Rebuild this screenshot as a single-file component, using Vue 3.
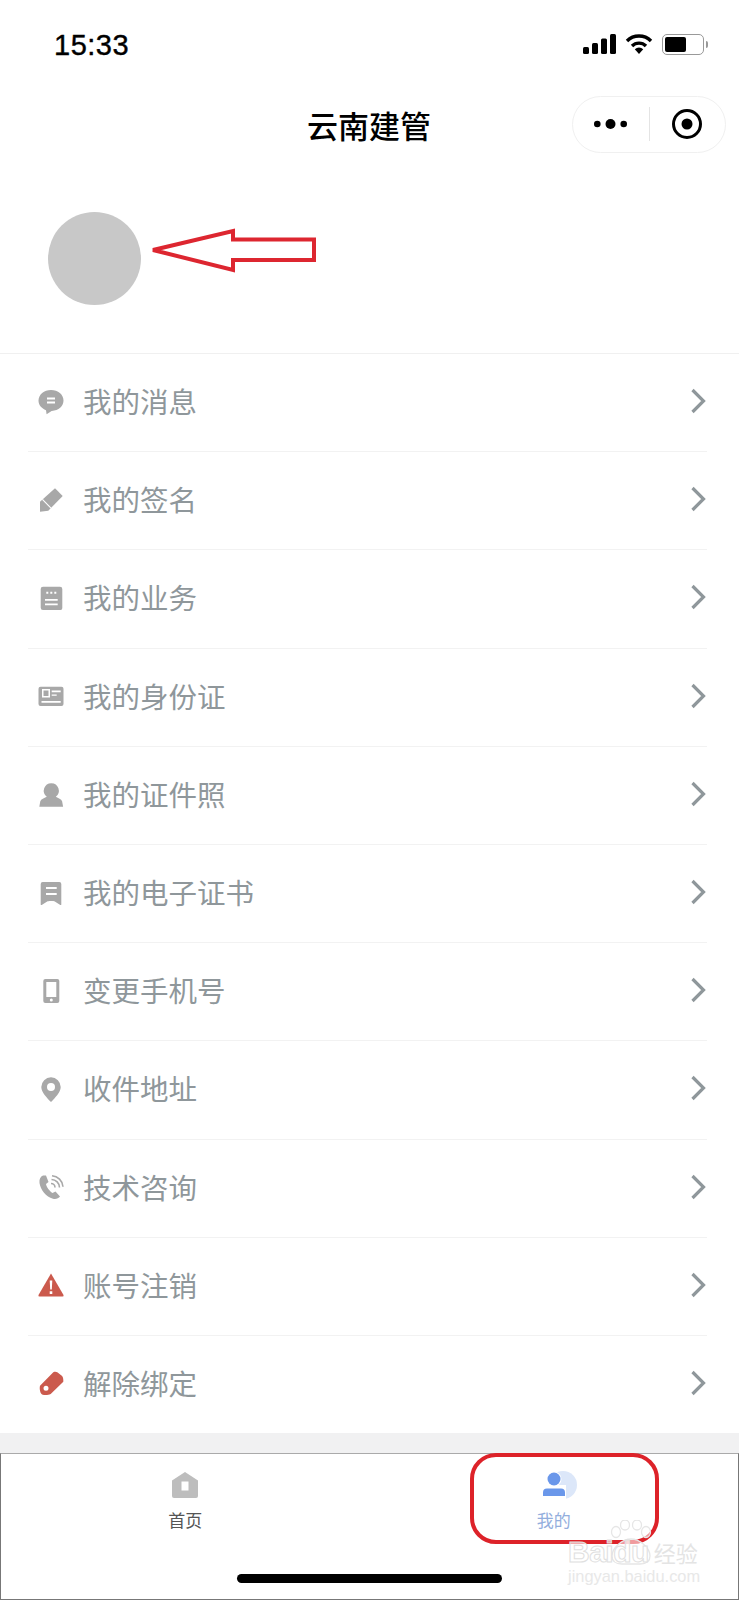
<script setup>
// menu rows: main = filled shape, cut = white detail, line = stroked detail
const gray = '#a8a8a8';
const red = '#cb5a4d';

const menus = [
  {
    label: '我的消息', color: gray,
    main: 'M13 1C6 1 .5 5.6 .5 11.6c0 4.6 3.2 8 7.5 9.6l.6 4 5-3.3C20.5 22 25.5 17.5 25.5 11.6 25.5 5.6 20 1 13 1z',
    cut: 'M9 8.500h8v2H9zM9 12.500h8v2H9z'
  },
  {
    label: '我的签名', color: gray,
    main: 'M2 24.700V14.700L17 1.300 24.700 9 10.300 23.700z',
    cut: 'M4 12.800l.8-.8 8.600 8.800-.8.800z'
  },
  {
    label: '我的业务', color: gray,
    main: 'M5 1.700h17a2.300 2.300 0 0 1 2.300 2.300v19a2 2 0 0 1-2.300 2H5a2.300 2.300 0 0 1-2.300-2.300V4A2.300 2.300 0 0 1 5 1.700z',
    cut: 'M7 14h12.700v1.800H7zM7 18.400h12.700v1.800H7zM8.300 6.800h2v2h-2zM12.300 6.800h2v2h-2zM16.300 6.800h2v2h-2z'
  },
  {
    label: '我的身份证', color: gray,
    main: 'M2.500 3.700h21a2 2 0 0 1 2 2v15.300a2 2 0 0 1-2 2h-21a2 2 0 0 1-2-2V5.700a2 2 0 0 1 2-2z',
    cut: 'M4 6h8v8.500H4zM13.700 7.500h9v1.800h-9zM13.700 11.500h5v1.300h-5zM3.500 18h19.200v1.800H3.500z',
    inner: 'M5.500 7.500h5v5.500h-5z'
  },
  {
    label: '我的证件照', color: gray,
    main: 'M13.300 2.200a7.500 7.500 0 0 1 4.500 13.500c2.500 1.200 5.500 2.500 6.300 4.500l1 5.500H1.300l1-5.500c.8-2 3.800-3.300 6.500-4.500a7.500 7.500 0 0 1 4.500-13.500z'
  },
  {
    label: '我的电子证书', color: gray,
    main: 'M5.700 2h15.600a2 2 0 0 1 2 2v20.500c0 .6-.6.8-1 .4l-5.500-3.400c-.7-.4-1.500-.6-3.800-.6s-3.100.2-3.800.6l-5.500 3.400c-.4.4-1 .2-1-.4V4a2 2 0 0 1 2-2z',
    cut: 'M8 7h10.700v2H8zM8 13h10.700v2H8z'
  },
  {
    label: '变更手机号', color: gray,
    main: 'M7.300 1h12a2 2 0 0 1 2 2v20a2 2 0 0 1-2 2h-12a2 2 0 0 1-2-2V3a2 2 0 0 1 2-2z',
    cut: 'M8.300 4h10v15h-10zM11.800 22a1.500 1.500 0 1 0 3 0 1.500 1.500 0 1 0-3 0z'
  },
  {
    label: '收件地址', color: gray,
    main: 'M13 1.300a9.700 9.700 0 0 1 9.700 9.700c0 5-5.700 11-9.700 15-4-4-9.700-10-9.700-15A9.700 9.700 0 0 1 13 1.300z',
    cut: 'M9 11a4 4 0 1 0 8 0 4 4 0 1 0-8 0z'
  },
  {
    label: '技术咨询', color: gray,
    main: 'M5 1.500C2.500 2.500 1 5 1.500 9c1 6.500 6.500 14 13.500 15.800 3 .7 5.500-.3 7-2.300l-4.500-5-3 1.500c-3-2-6-6-6.500-9l2.500-2L8 1.500z',
    line: 'M13 9.500a4 4 0 0 1 4 4M13.500 5.500a8 8 0 0 1 8 8M14 1.700a12 12 0 0 1 11 11'
  },
  {
    label: '账号注销', color: red,
    main: 'M13 1.500L25.500 23q.5 1.500-1 1.500H1.500q-1.500 0-1-1.500z',
    cut: 'M11.700 8.500h2.600l-.5 9h-1.600zM11.700 19.300h2.600v2.600h-2.600z'
  },
  {
    label: '解除绑定', color: red,
    main: 'M2 15.700L15.300 2.300c1.500-.8 3-.5 4 0l4.500 3.500c1.300 1 1.700 4 1.500 5.900L12.700 24c-2.500 1.200-6 1-8 .7-2.500-.7-3.500-6-2.700-9z',
    cut: 'M5.500 18.300a2.500 2.500 0 1 0 5 0 2.500 2.500 0 1 0-5 0z'
  }
];
</script>

<template>
  <div class="page">
    <!-- status bar -->
    <div class="status-bar">
      <span class="time">15:33</span>
      <div class="status-icons">
        <svg width="33" height="20" viewBox="0 0 33 20">
          <rect x="0" y="13" width="6" height="7" rx="1.500" />
          <rect x="9" y="9" width="6" height="11" rx="1.500" />
          <rect x="18" y="4.500" width="6" height="15.500" rx="1.500" />
          <rect x="27" y="0" width="6" height="20" rx="1.500" />
        </svg>
        <svg width="28" height="20" viewBox="0 0 28 20">
          <path d="M2 7a17 17 0 0 1 24 0" fill="none" stroke="#000" stroke-width="3.400" />
          <path d="M7 12a10 10 0 0 1 14 0" fill="none" stroke="#000" stroke-width="3.400" />
          <path d="M9.800 15.200a6 6 0 0 1 8.400 0L14 20z" />
        </svg>
        <div class="battery">
          <div class="battery-level"></div>
        </div>
        <div class="battery-nub"></div>
      </div>
    </div>

    <!-- nav bar -->
    <div class="nav-bar">
      <span class="nav-title">云南建管</span>
      <div class="capsule">
        <div class="capsule-part">
          <svg width="33" height="12" viewBox="0 0 33 12">
            <circle cx="3.300" cy="6" r="3.300" />
            <circle cx="16.500" cy="6" r="5" />
            <circle cx="29.700" cy="6" r="3.300" />
          </svg>
        </div>
        <div class="capsule-line"></div>
        <div class="capsule-part">
          <svg width="32" height="32" viewBox="0 0 32 32">
            <circle cx="16" cy="16" r="13.500" fill="none" stroke="#000" stroke-width="3" />
            <circle cx="16" cy="16" r="5.500" />
          </svg>
        </div>
      </div>
    </div>

    <!-- profile -->
    <div class="profile">
      <div class="avatar"></div>
    </div>

    <!-- menu -->
    <div class="menu">
      <div v-for="item in menus" :key="item.label" class="menu-row">
        <svg class="menu-icon" width="26" height="26" viewBox="0 0 26 26">
          <path :d="item.main" :fill="item.color" />
          <path v-if="item.cut" :d="item.cut" fill="#fff" />
          <path v-if="item.inner" :d="item.inner" :fill="item.color" />
          <path v-if="item.line" :d="item.line" fill="none" :stroke="item.color" stroke-width="1.600" />
        </svg>
        <span class="menu-label">{{ item.label }}</span>
        <svg class="chevron" width="16" height="26" viewBox="0 0 16 26">
          <path d="M2.500 2l11 11-11 11" fill="none" stroke="#8f979b" stroke-width="3.200" />
        </svg>
      </div>
    </div>

    <div class="band"></div>

    <!-- tab bar -->
    <div class="tab-bar">
      <div class="tabs">
        <div class="tab">
          <svg width="28" height="28" viewBox="0 0 28 28">
            <path d="M14 1L27 9.500V25a2 2 0 0 1-2 2H3a2 2 0 0 1-2-2V9.500z" fill="#bdbdbd" />
            <rect x="10.500" y="10.500" width="7" height="9" fill="#fff" />
          </svg>
          <span class="tab-label">首页</span>
        </div>
        <div class="tab active">
          <svg width="36" height="28" viewBox="0 0 36 28">
            <circle cx="21" cy="14" r="14" fill="#dce7f9" />
            <circle cx="12" cy="8" r="7.500" fill="#fff" />
            <rect x="0" y="14" width="24" height="14" fill="#fff" />
            <circle cx="12" cy="8" r="6.500" fill="#6a97ea" />
            <path d="M5 17.500h14a4 4 0 0 1 4 4V25H1v-3.500a4 4 0 0 1 4-4z" fill="#6a97ea" />
          </svg>
          <span class="tab-label">我的</span>
        </div>
      </div>
      <div class="home-bar"></div>
    </div>

    <!-- annotations on top of the screenshot -->
    <svg class="arrow" width="170" height="46" viewBox="0 0 170 46">
      <path d="M3 22L83 3V11.500H164V32H83V42z" fill="#fff" stroke="#dd2630" stroke-width="4" />
    </svg>
    <div class="tab-mark"></div>

    <div class="watermark">
      <svg class="paw" width="42" height="46" viewBox="0 0 42 46">
        <g fill="rgba(255,255,255,.55)" stroke="#e6e6e6" stroke-width="1.300">
          <ellipse cx="6" cy="12" rx="4.500" ry="5.500" />
          <ellipse cx="15" cy="5" rx="4.500" ry="5" />
          <ellipse cx="27" cy="5" rx="4.500" ry="5" />
          <ellipse cx="36" cy="12" rx="4.500" ry="5.500" />
          <path d="M21 19c-9 0-19 9-19 17 0 7 5 8 10 8h18c5 0 10-1 10-8 0-8-10-17-19-17z" />
        </g>
      </svg>
      <div class="wm-top"><span class="wm-brand">Baidu</span><span class="wm-cn">经验</span></div>
      <div class="wm-url">jingyan.baidu.com</div>
    </div>
  </div>
</template>

<style scoped>
.page {
  position: relative;
  width: 739px;
  height: 1600px;
  overflow: hidden;
  background: #fff;
  font-family: "Noto Sans CJK SC", "Liberation Sans", sans-serif;
}

.status-bar {
  height: 88px;
  box-sizing: border-box;
  padding: 0 31px 0 54px;
  display: flex;
  align-items: center;
  justify-content: space-between;
}
.time {
  margin-top: 2px;
  font-family: "Liberation Sans", sans-serif;
  font-size: 29px;
  letter-spacing: .5px;
  color: #000;
  -webkit-text-stroke: .4px #000;
}
.status-icons {
  display: flex;
  align-items: center;
  gap: 9px;
}
.battery {
  width: 42px;
  height: 21px;
  box-sizing: border-box;
  margin-right: -7px;
  padding: 2px;
  border: 1.500px solid #999;
  border-radius: 5px;
}
.battery-level {
  width: 21px;
  height: 100%;
  background: #000;
  border-radius: 2px;
}
.battery-nub {
  width: 2px;
  height: 7px;
  background: #999;
  border-radius: 0 2px 2px 0;
}

.nav-bar {
  height: 72px;
  box-sizing: border-box;
  padding-right: 13px;
  display: grid;
  grid-template-columns: 1fr auto 1fr;
  align-items: center;
}
.nav-title {
  grid-column: 2;
  margin-left: 12px;
  font-size: 31px;
  font-weight: 500;
  color: #000;
}
.capsule {
  grid-column: 3;
  justify-self: end;
  width: 154px;
  height: 57px;
  box-sizing: border-box;
  display: flex;
  align-items: center;
  border: 1px solid #f0f0f0;
  border-radius: 29px;
}
.capsule-part {
  flex: 1;
  display: flex;
  justify-content: center;
  align-items: center;
}
.capsule-line {
  width: 1px;
  height: 34px;
  background: #e4e4e4;
}

.profile {
  height: 193px;
  box-sizing: border-box;
  padding: 52px 0 0 48px;
}
.avatar {
  width: 93px;
  height: 93px;
  border-radius: 50%;
  background: #c8c8c8;
}

.menu {
  height: 1080px;
  box-sizing: border-box;
  border-top: 1px solid #f0f0f0;
  padding: 0 32px 0 28px;
  display: flex;
  flex-direction: column;
}
.menu-row {
  flex: 1;
  display: flex;
  align-items: center;
  padding: 0 1px 0 10px;
  border-bottom: 1px solid #f2f2f2;
}
.menu-row:last-child {
  border-bottom: 0;
}
.menu-icon {
  flex: none;
  margin-bottom: 2px;
}
.menu-label {
  flex: 1;
  margin: 0 0 4px 19px;
  font-size: 28.500px;
  color: #8f979b;
}
.chevron {
  flex: none;
  margin-bottom: 3px;
}

.band {
  height: 20px;
  background: #f1f1f2;
}

.tab-bar {
  height: 147px;
  box-sizing: border-box;
  border-top: 1.500px solid #aaa;
  border-left: 1px solid #777;
  border-right: 1px solid #777;
  border-bottom: 1px solid #777;
  display: flex;
  flex-direction: column;
  align-items: center;
}
.tabs {
  width: 100%;
  display: flex;
  padding-top: 17px;
}
.tab {
  flex: 1;
  display: flex;
  flex-direction: column;
  align-items: center;
}
.tab-label {
  margin-top: 9px;
  font-size: 17px;
  line-height: 24px;
  color: #555;
}
.active .tab-label {
  color: #93aedd;
}
.active svg {
  margin-left: 13px;
}
.home-bar {
  margin-top: 42px;
  width: 265px;
  height: 9px;
  border-radius: 5px;
  background: #000;
}

.arrow {
  position: absolute;
  left: 150px;
  top: 228px;
}
.tab-mark {
  position: absolute;
  left: 470px;
  top: 1453px;
  width: 189px;
  height: 91px;
  box-sizing: border-box;
  border: 4px solid #dd2229;
  border-radius: 26px;
}

.watermark {
  position: absolute;
  left: 568px;
  top: 1538px;
  width: 135px;
}
.paw {
  position: absolute;
  left: 42px;
  top: -18px;
}
.wm-top {
  position: relative;
  display: flex;
  align-items: center;
  height: 28px;
}
.wm-brand {
  font-family: "Liberation Sans", sans-serif;
  font-size: 30px;
  font-weight: 700;
  letter-spacing: -.5px;
  color: rgba(255, 255, 255, .65);
  -webkit-text-stroke: 1px #e0e0e0;
}
.wm-cn {
  margin-left: 5px;
  font-size: 22px;
  color: #e4e4e4;
}
.wm-url {
  margin-top: 1px;
  font-family: "Liberation Sans", sans-serif;
  font-size: 16.400px;
  color: #e8e8e8;
  white-space: nowrap;
}
</style>
